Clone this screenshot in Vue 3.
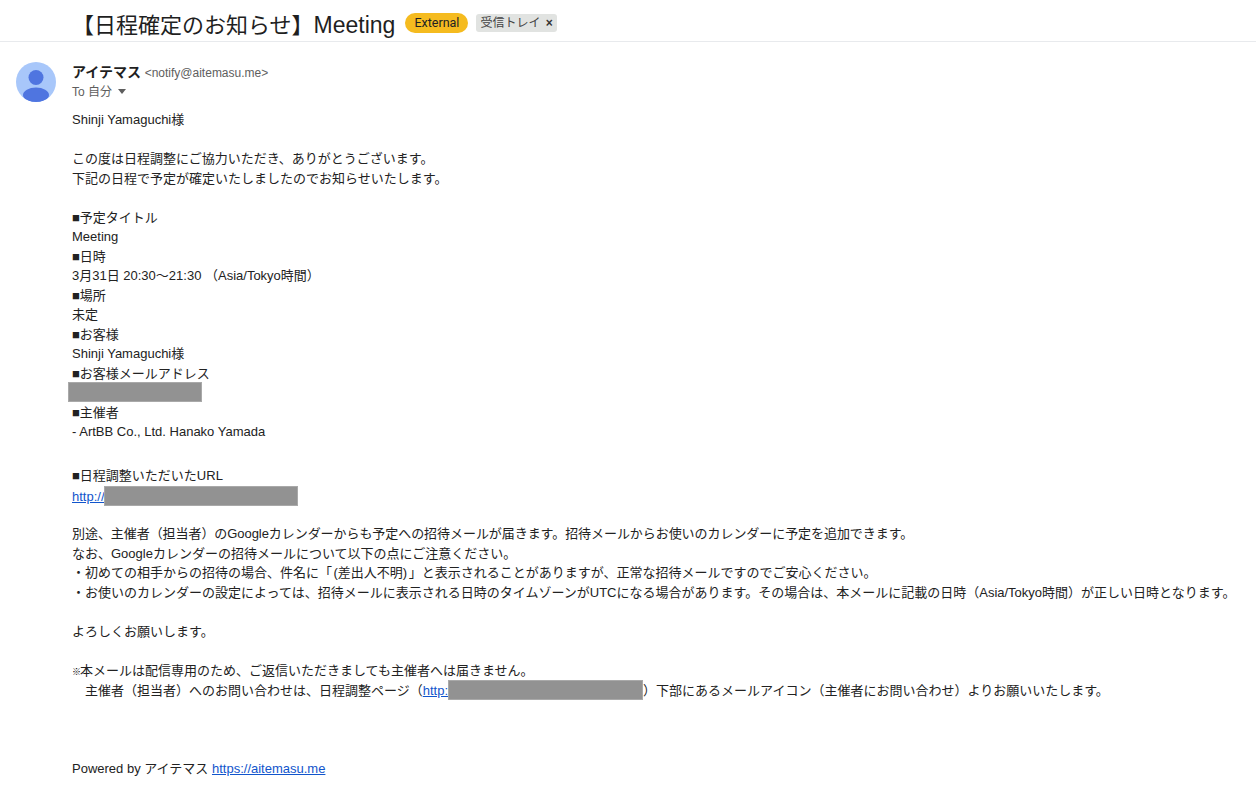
<script setup>
const headLines = [
  'Shinji Yamaguchi様',
  '',
  'この度は日程調整にご協力いただき、ありがとうございます。',
  '下記の日程で予定が確定いたしましたのでお知らせいたします。',
  '',
  '■予定タイトル',
  'Meeting',
  '■日時',
  '3月31日 20:30〜21:30 （Asia/Tokyo時間）',
  '■場所',
  '未定',
  '■お客様',
  'Shinji Yamaguchi様',
  '■お客様メールアドレス',
]
</script>

<template>
  <div class="page">
    <header class="subject">
      <h1>【日程確定のお知らせ】<span class="latin">Meeting</span></h1>
      <span class="external">External</span>
      <span class="label">受信トレイ <b>×</b></span>
    </header>

    <div class="message">
      <svg class="avatar" viewBox="0 0 40 40" width="40" height="40">
        <defs>
          <clipPath id="round"><circle cx="20" cy="20" r="20" /></clipPath>
        </defs>
        <circle cx="20" cy="20" r="20" fill="#a8c7fa" />
        <g clip-path="url(#round)" fill="#4f75e0">
          <circle cx="20" cy="15.5" r="7.5" />
          <ellipse cx="20" cy="33" rx="13" ry="7.5" />
        </g>
      </svg>

      <div class="content">
        <div class="from"><strong>アイテマス</strong> <span>&lt;notify@aitemasu.me&gt;</span></div>
        <div class="to">To 自分 <i class="caret"></i></div>

        <div class="body">
          <div v-for="(line, i) in headLines" :key="i" class="line">{{ line }}</div>
          <div class="line"><span class="redact mail"></span></div>
          <div class="line">■主催者</div>
          <div class="line">- ArtBB Co., Ltd. Hanako Yamada</div>
          <div class="line url-head">■日程調整いただいたURL</div>
          <div class="line"><a>http://</a><span class="redact url"></span></div>
          <div class="line"></div>
          <div class="line tight">別途、主催者（担当者）のGoogleカレンダーからも予定への招待メールが届きます。招待メールからお使いのカレンダーに予定を追加できます。</div>
          <div class="line">なお、Googleカレンダーの招待メールについて以下の点にご注意ください。</div>
          <div class="line">・初めての相手からの招待の場合、件名に「<span class="paren">(差出人不明)</span>」と表示されることがありますが、正常な招待メールですのでご安心ください。</div>
          <div class="line">・お使いのカレンダーの設定によっては、招待メールに表示される日時のタイムゾーンがUTCになる場合があります。その場合は、本メールに記載の日時（Asia/Tokyo時間）が正しい日時となります。</div>
          <div class="line"></div>
          <div class="line">よろしくお願いします。</div>
          <div class="line"></div>
          <div class="line"><span class="mark">※</span>本メールは配信専用のため、ご返信いただきましても主催者へは届きません。</div>
          <div class="line indent">主催者（担当者）へのお問い合わせは、日程調整ページ（<a>http:</a><span class="redact page-url"></span>）下部にあるメールアイコン（主催者にお問い合わせ）よりお願いいたします。</div>
          <div class="line"></div>
          <div class="line"></div>
          <div class="line"></div>
          <div class="line powered">Powered by アイテマス <a>https://aitemasu.me</a></div>
        </div>
      </div>
    </div>
  </div>
</template>

<style>
html, body {
  background: #fff;
}
</style>

<style scoped>
.page {
  width: 1256px;
  height: 795px;
  overflow: hidden;
  background: #fff;
  color: #222;
  font-family: "Liberation Sans", "Noto Sans CJK JP", sans-serif;
  font-size: 13px;
}

.subject {
  display: flex;
  align-items: center;
  height: 37px;
  padding: 4px 0 0 72px;
  border-bottom: 1px solid #e8eaed;
}

h1 {
  margin: 0;
  font-size: 22px;
  font-weight: 400;
  color: #1f1f1f;
}

.latin {
  font-size: 23px;
}

.external {
  margin-left: 10px;
  width: 63px;
  height: 20px;
  line-height: 20px;
  text-align: center;
  border-radius: 10px;
  background: #f5bb1f;
  color: #202124;
  font-family: Roboto, "Liberation Sans", sans-serif;
  font-size: 12.5px;
}

.label {
  margin-left: 8px;
  padding: 0 4px;
  height: 18px;
  line-height: 18px;
  border-radius: 3px;
  background: #e1e3e1;
  color: #444;
  font-size: 12px;
}

.label b {
  margin-left: 2px;
  color: #333;
  font-weight: 700;
}

.message {
  display: flex;
  padding: 20px 0 0 16px;
}

.avatar {
  flex: none;
}

.content {
  margin-left: 16px;
  min-width: 0;
}

.from {
  line-height: 20px;
}

.from strong {
  color: #1f1f1f;
  font-size: 14px;
}

.from span {
  color: #5e5e5e;
  font-size: 12px;
}

.to {
  line-height: 18px;
  color: #5e5e5e;
  font-size: 12px;
}

.caret {
  display: inline-block;
  margin-left: 3px;
  border: 4px solid transparent;
  border-top: 5px solid #5e5e5e;
  border-bottom: 0;
  vertical-align: 2px;
}

.body {
  margin-top: 9px;
}

.line {
  height: 19.5px;
  line-height: 19.5px;
  white-space: nowrap;
}

.tight {
  letter-spacing: -0.06px;
}

.paren {
  padding: 0 1.5px;
}

.mark {
  display: inline-block;
  width: 8px;
  color: #000;
  font-size: 9px;
  font-weight: 700;
}

.indent {
  padding-left: 13px;
}

.url-head {
  margin-top: 24px;
}

.powered {
  margin-top: 1px;
}

a {
  color: #1155cc;
  text-decoration: underline;
}

.redact {
  display: inline-block;
  height: 20px;
  background: #929292;
  box-shadow: inset 0 0 0 1px #a9a9a9;
  vertical-align: -5px;
}

.mail {
  width: 134px;
  margin: -1px 0 0 -4px;
}

.url {
  width: 194px;
  margin: 1px 0 0 -1px;
}

.page-url {
  width: 195px;
}
</style>
